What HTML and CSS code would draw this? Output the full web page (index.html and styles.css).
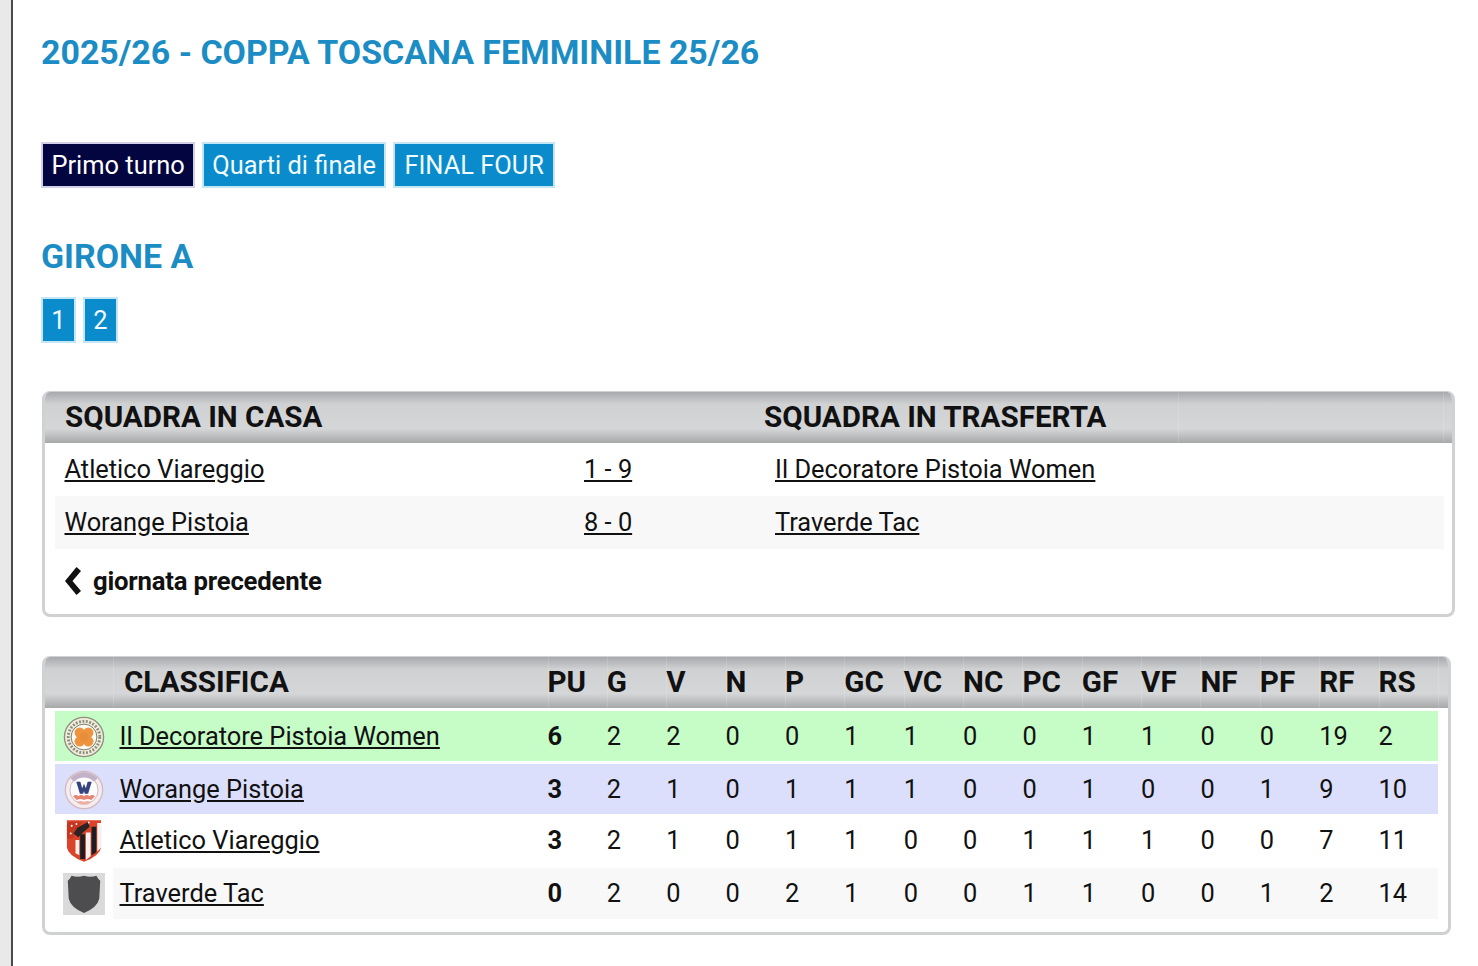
FILE: index.html
```html
<!DOCTYPE html>
<html lang="it">
<head>
<meta charset="utf-8">
<title>Coppa Toscana Femminile 25/26</title>
<link rel="stylesheet" href="styles.css">
</head>
<body>
<div class="frame">
  <main class="page">
    <h1 class="title">2025/26 - COPPA TOSCANA FEMMINILE 25/26</h1>
    <nav class="tabs">
      <a class="btn btn-active" href="#">Primo turno</a>
      <a class="btn" href="#">Quarti di finale</a>
      <a class="btn btn-wide" href="#">FINAL FOUR</a>
    </nav>
    <h2 class="group">GIRONE A</h2>
    <nav class="pager">
      <a class="btn" href="#">1</a>
      <a class="btn" href="#">2</a>
    </nav>

    <section class="box box-matches">
      <div class="head match-head">
        <div class="hc hc-home">SQUADRA IN CASA</div>
        <div class="hc">SQUADRA IN TRASFERTA</div>
        <div class="hc hc-line"></div>
        <div class="hc hc-line"></div>
      </div>
      <div class="row">
        <a class="cell" href="#">Atletico Viareggio</a>
        <a class="cell" href="#">1 - 9</a>
        <a class="cell" href="#">Il Decoratore Pistoia Women</a>
      </div>
      <div class="row row-alt">
        <a class="cell" href="#">Worange Pistoia</a>
        <a class="cell" href="#">8 - 0</a>
        <a class="cell" href="#">Traverde Tac</a>
      </div>
      <div class="prev">
        <svg class="chev" viewBox="0 0 16 28" aria-hidden="true"><path d="M11.5 0 L16 4 L7.5 14 L16 24 L11.5 28 L0 14 Z"/></svg>
        <span>giornata precedente</span>
      </div>
    </section>

    <section class="box box-table">
      <div class="head table-head">
        <div class="hc"></div>
        <div class="hc hc-line hc-name">CLASSIFICA</div>
        <div class="hc hc-line">PU</div><div class="hc hc-line">G</div><div class="hc hc-line">V</div><div class="hc hc-line">N</div><div class="hc hc-line">P</div>
        <div class="hc hc-line">GC</div><div class="hc hc-line">VC</div><div class="hc hc-line">NC</div><div class="hc hc-line">PC</div>
        <div class="hc hc-line">GF</div><div class="hc hc-line">VF</div><div class="hc hc-line">NF</div><div class="hc hc-line">PF</div>
        <div class="hc hc-line">RF</div><div class="hc hc-line">RS</div>
        <div class="hc hc-line"></div>
      </div>
      <div class="rows">
        <div class="trow t-green">
          <div class="logo">
            <svg viewBox="0 0 44 44" width="42" height="42" aria-hidden="true">
              <circle cx="22" cy="22" r="20.5" fill="#f0eedd" stroke="#8f8f7c" stroke-width="1.4"/>
              <circle cx="22" cy="22" r="16.5" fill="none" stroke="#8d8d7c" stroke-width="3" stroke-dasharray="2 1.6"/>
              <circle cx="22" cy="22" r="13.5" fill="#fbfaf3" stroke="#77776a" stroke-width="1"/>
              <circle cx="17.5" cy="17.5" r="5.4" fill="#ee9440"/><circle cx="26.5" cy="17.5" r="5.4" fill="#ee9440"/>
              <circle cx="17.5" cy="26.5" r="5.4" fill="#ee9440"/><circle cx="26.5" cy="26.5" r="5.4" fill="#ee9440"/>
              <circle cx="22" cy="22" r="5" fill="#e88d3a"/>
            </svg>
          </div>
          <a class="name" href="#">Il Decoratore Pistoia Women</a>
          <b>6</b><span>2</span><span>2</span><span>0</span><span>0</span><span>1</span><span>1</span><span>0</span><span>0</span><span>1</span><span>1</span><span>0</span><span>0</span><span>19</span><span>2</span>
        </div>
        <div class="trow t-blue">
          <div class="logo">
            <svg viewBox="0 0 44 44" width="40" height="40" aria-hidden="true">
              <circle cx="22" cy="22" r="20.5" fill="#f5ecee" stroke="#d3b8bc" stroke-width="1.4"/>
              <circle cx="22" cy="22" r="15.5" fill="#fdfbfb" stroke="#c4b2c0" stroke-width="1"/>
              <path d="M7 9 A20 20 0 0 1 37 9 L33 13 A15 15 0 0 0 11 13 Z" fill="#c3b1c8"/>
              <path d="M13.5 13 H18 L20 20 L22 15 L24 20 L26 13 H30.5 L26.5 26 H22.8 L22 23 L21 26 H17.5 Z" fill="#33447f"/>
              <path d="M10 29 Q13 26 16 29 Q19 26 22 29 Q25 26 28 29 Q31 26 34 29 L30 33 Q26 31 22 33 Q18 31 14 33 Z" fill="#e8836f"/>
              <path d="M14 35 Q18 33 22 35 Q26 33 30 35 L26 38 H18 Z" fill="#eeb0a4"/>
            </svg>
          </div>
          <a class="name" href="#">Worange Pistoia</a>
          <b>3</b><span>2</span><span>1</span><span>0</span><span>1</span><span>1</span><span>1</span><span>0</span><span>0</span><span>1</span><span>0</span><span>0</span><span>1</span><span>9</span><span>10</span>
        </div>
        <div class="trow t-white">
          <div class="logo">
            <svg viewBox="0 0 38 46" width="36" height="44" aria-hidden="true">
              <path d="M1 1 H37 V30 Q36 38 19 45 Q2 38 1 30 Z" fill="#d8432a"/>
              <path d="M15 16 H20 V42 H15 Z M27 8 H32 V35 L27 38 Z" fill="#1c1c22"/>
              <path d="M10 22 H14 V38 L10 36 Z M21 14 H26 V39 L21 43 Z M33 4 H37 V30 L33 34 Z" fill="#f6f1ee"/>
              <path d="M3 3 H17 L7 20 L1 20 V5 Z" fill="#c63722"/>
              <path d="M12 9 L23 3 L25 8 L18 14 L13 19 L8 15 Z" fill="#2b2324"/>
              <circle cx="6" cy="7" r="1.1" fill="#fff"/><circle cx="11" cy="5" r="1" fill="#fff"/><circle cx="24" cy="3.5" r="1" fill="#fff"/><circle cx="5" cy="15" r="1" fill="#fff"/>
            </svg>
          </div>
          <a class="name" href="#">Atletico Viareggio</a>
          <b>3</b><span>2</span><span>1</span><span>0</span><span>1</span><span>1</span><span>0</span><span>0</span><span>1</span><span>1</span><span>1</span><span>0</span><span>0</span><span>7</span><span>11</span>
        </div>
        <div class="trow t-alt">
          <div class="logo">
            <svg viewBox="0 0 44 44" width="42" height="42" aria-hidden="true">
              <rect width="44" height="44" fill="#dadada"/>
              <path d="M9 3 Q15 5 22 3 Q29 5 35 3 Q37 7 39 8 L38 27 Q36 36 22 42 Q8 36 6 27 L5 8 Q7 7 9 3 Z" fill="#4d4d4f"/>
            </svg>
          </div>
          <a class="name" href="#">Traverde Tac</a>
          <b>0</b><span>2</span><span>0</span><span>0</span><span>2</span><span>1</span><span>0</span><span>0</span><span>1</span><span>1</span><span>0</span><span>0</span><span>1</span><span>2</span><span>14</span>
        </div>
      </div>
    </section>
  </main>
</div>
</body>
</html>
```

FILE: styles.css
```css
* { box-sizing: border-box; }
html, body { margin: 0; height: 100%; }
body {
  background: #fff;
  color: #111;
  font-family: Roboto, "Liberation Sans", sans-serif;
  overflow: hidden;
}
a { color: inherit; }

.frame {
  height: 966px;
  padding-left: 11px;
  background: #e9e9e9;
}
.page {
  height: 100%;
  padding: 0 0 0 28px;
  background: #fff;
  border-left: 2px solid #4a4a4c;
}

.title {
  margin: 0;
  padding-top: 34px;
  height: 142px;
  font-size: 33.9px;
  line-height: 38px;
  font-weight: 700;
  color: #1b8dc4;
}
.tabs, .pager { display: flex; }
.tabs { gap: 6.5px; }
.pager { gap: 7px; }
.btn {
  display: block;
  height: 46px;
  padding: 0 8.5px;
  border: 2px solid #c5e6f5;
  background: #0a8bcb;
  color: #f2fbff;
  font-size: 25.4px;
  line-height: 43px;
  text-decoration: none;
  white-space: nowrap;
}
.btn-active { background: #02053f; color: #fff; border-color: #d2d0e8; }
.btn-wide { padding: 0 9.5px; }

.group {
  margin: 0;
  padding-top: 50px;
  height: 109px;
  font-size: 33.9px;
  line-height: 38px;
  font-weight: 700;
  color: #1b8dc4;
}
.pager .btn { width: 35px; padding: 0; text-align: center; }

.box {
  margin-left: 1px;
  border: 3px solid #d0d1d2;
  border-top-width: 1px;
  border-radius: 8px;
  background: #fff;
  overflow: hidden;
}
.box-matches { width: 1413px; height: 226px; margin-top: 48px; }
.box-table { width: 1409px; height: 279px; margin-top: 39px; }

.head {
  display: grid;
  height: 51px;
  background: linear-gradient(#a7a9ac 0, #d0d1d3 24%, #d5d6d8 72%, #a6a8aa 100%);
  font-size: 29.6px;
  font-weight: 700;
  color: #111;
}
.hc { line-height: 50px; white-space: nowrap; }
.hc-line { box-shadow: inset 1px 0 0 rgba(255,255,255,.15); }
.hc-home { padding-left: 20px; }
.hc-name { padding-left: 11px; }
.match-head { grid-template-columns: 719px 414px 265px 1fr; }
.table-head { grid-template-columns: 68px 434.5px repeat(15, 59.37px) 1fr; }

.row {
  display: grid;
  grid-template-columns: 529px 191px 1fr;
  height: 53px;
  margin: 0 8px 0 10px;
  font-size: 25.4px;
  line-height: 53px;
}
.row .cell:first-child { padding-left: 9.5px; }
.row-alt { background: #f8f8f8; }
.cell { white-space: nowrap; }

.prev {
  display: flex;
  align-items: center;
  gap: 12px;
  padding-left: 20px;
  height: 63px;
  font-size: 25.7px;
  font-weight: 700;
  letter-spacing: -.2px;
}
.chev { width: 16px; height: 28px; fill: #111; display: block; }

.rows {
  display: flex;
  flex-direction: column;
  padding: 3px 0 0 10px;
}
.trow {
  display: grid;
  grid-template-columns: 58px 434.5px repeat(15, 59.37px);
  width: 1383px;
  height: 51px;
  font-size: 25.4px;
  line-height: 51px;
  align-items: center;
}
.trow b { font-weight: 700; }
.t-green { background: #c6fcc6; height: 50px; margin-bottom: 3px; }
.t-blue { background: #dcdffb; height: 50px; margin-bottom: 1px; }
.t-white { background: #fff; margin-bottom: 2px; }
.t-alt { background: linear-gradient(90deg, #fff 58px, #f8f8f8 58px); }
.logo { display: flex; justify-content: center; align-items: center; height: 50px; filter: blur(.4px); }
.name { padding-left: 6.5px; white-space: nowrap; }
```
